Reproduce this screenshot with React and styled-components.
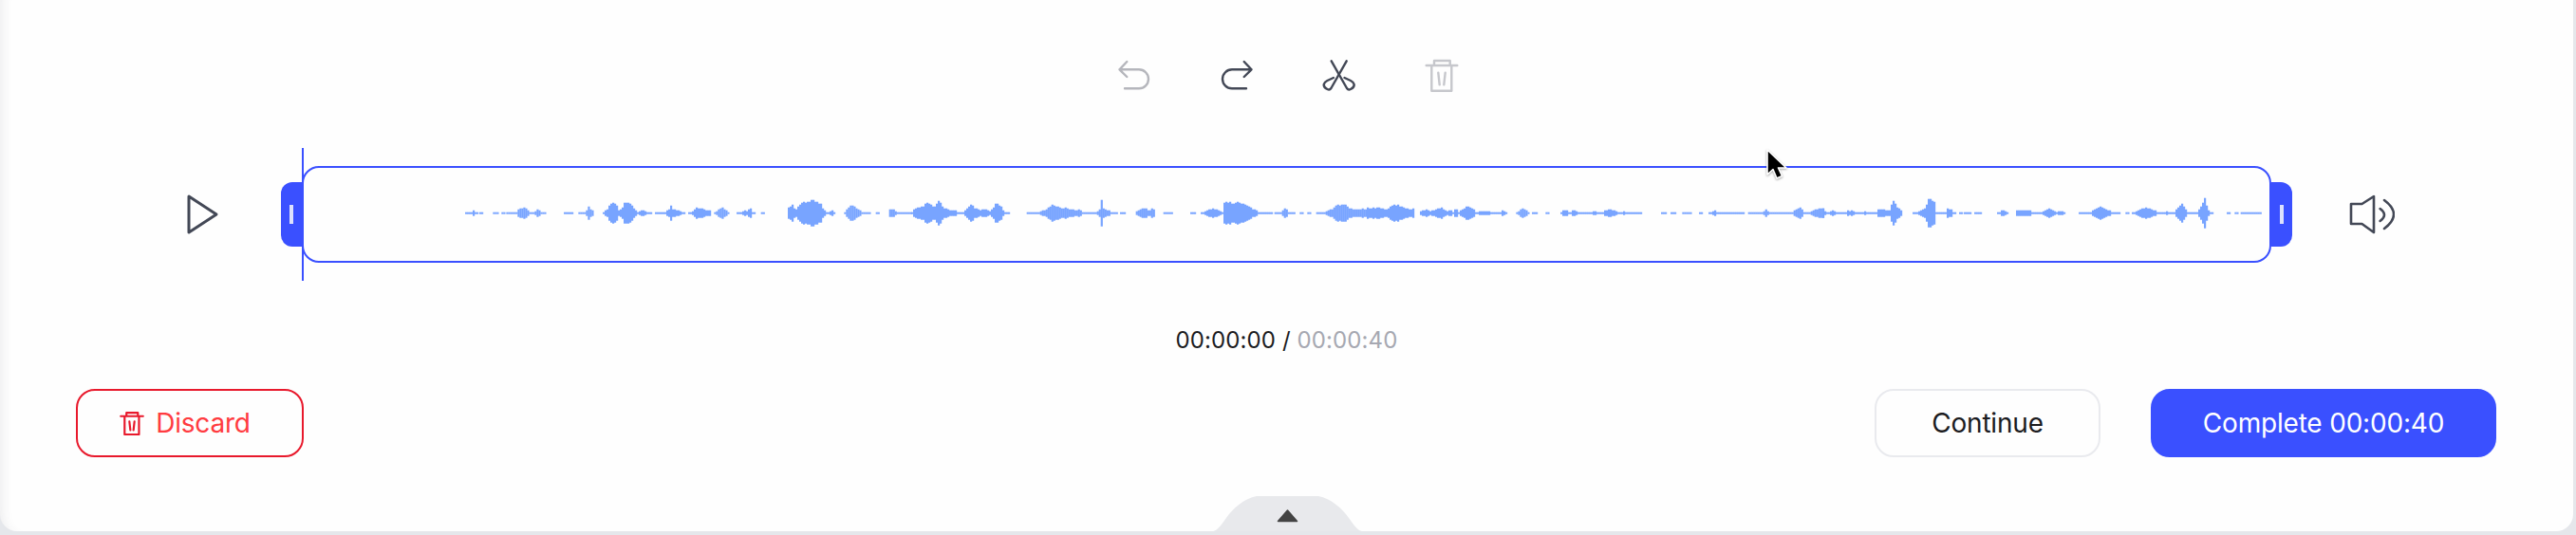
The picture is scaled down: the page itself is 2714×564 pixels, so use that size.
// App.jsx
import React from 'react';
import styled, { createGlobalStyle } from 'styled-components';

const GlobalStyle = createGlobalStyle`
  html, body {
    margin: 0;
    padding: 0;
    background: #e5e7eb;
    overflow: hidden;
  }
  * {
    box-sizing: border-box;
  }
`;

const Panel = styled.div`
  position: relative;
  width: 2711px;
  height: 560px;
  padding-top: 61px;
  background: #fefefe;
  border-radius: 0 0 18px 18px;
  box-shadow: inset 14px 0 14px -14px rgba(60, 60, 70, 0.12);
  font-family: Inter, 'Liberation Sans', sans-serif;
  display: flex;
  flex-direction: column;
`;

const Toolbar = styled.div`
  display: flex;
  justify-content: center;
  gap: 72px;
  padding-left: 3px;
  height: 36px;
`;

const ToolButton = styled.button`
  width: 36px;
  height: 36px;
  padding: 0;
  border: 0;
  background: none;
  color: ${(props) => (props.$off ? props.$offColor || '#b5b6bc' : '#434856')};
  svg {
    display: block;
  }
`;

const PlayerRow = styled.div`
  display: flex;
  align-items: center;
  margin-top: 78px;
  padding: 0 188px 0 195px;
  color: #434856;
`;

const PlayerIcon = styled.svg`
  flex: none;
  display: block;
`;

const Selection = styled.div`
  position: relative;
  flex: 1;
  height: 102px;
  margin: 0 82px 0 87px;
  border: 2px solid #3a50ff;
  border-radius: 18px;
`;

const Playhead = styled.div`
  position: absolute;
  left: -2px;
  top: -21px;
  bottom: -21px;
  width: 2px;
  background: #3a50ff;
`;

const Handle = styled.div`
  position: absolute;
  top: 15px;
  width: 22px;
  height: 68px;
  background: #3a50ff;
  display: flex;
  align-items: center;
  justify-content: center;
  ${(props) =>
    props.$side === 'left'
      ? 'left: -24px; border-radius: 12px 0 0 12px;'
      : 'right: -24px; border-radius: 0 12px 12px 0;'}
  &::after {
    content: '';
    width: 4px;
    height: 20px;
    background: #dde1fd;
  }
`;

const Wave = styled.svg`
  display: block;
  width: 100%;
  height: 100%;
  filter: blur(0.5px);
`;

const TimeRow = styled.div`
  margin-top: 67px;
  height: 30px;
  line-height: 30px;
  font-size: 24px;
  letter-spacing: 0.1px;
  text-align: center;
  color: #1c1c1f;
`;

const TotalTime = styled.span`
  color: #a6a8b1;
`;

const Footer = styled.div`
  display: flex;
  align-items: center;
  justify-content: space-between;
  margin-top: 36px;
  padding: 0 81px 0 80px;
`;

const ButtonGroup = styled.div`
  display: flex;
  gap: 53px;
`;

const Button = styled.button`
  width: ${(props) => props.$width}px;
  height: 72px;
  display: flex;
  align-items: center;
  justify-content: center;
  gap: 12px;
  padding: 0 ${(props) => props.$trail || 0}px 0 0;
  font-family: inherit;
  font-size: 28px;
  letter-spacing: -0.2px;
  border-radius: 20px;
  border: 2px solid ${(props) => props.$border};
  background: ${(props) => props.$bg};
  color: ${(props) => props.$color};
`;

const DiscardIcon = styled.span`
  display: flex;
  color: #e8192c;
`;

const CollapseTab = styled.button`
  position: absolute;
  left: 1278px;
  bottom: 0;
  width: 157px;
  height: 37px;
  padding: 0;
  border: 0;
  background: none;
  svg {
    display: block;
  }
`;

const Cursor = styled.svg`
  position: absolute;
  left: 1859px;
  top: 156px;
  filter: drop-shadow(0 1px 1px rgba(0, 0, 0, 0.35));
`;

// waveform outline read off the reference: [x offset, segments of [x, half height]] in 3x px
const WAVE = [
  [480, [
    [[30, 3], [50, 3], [55, 8], [60, 3], [68, 3]],
    [[75, 3], [87, 3]],
    [[118, 3], [135, 3]],
    [[145, 3], [155, 3]],
    [[160, 3], [190, 3], [197, 14], [208, 16], [222, 14], [228, 4], [245, 4], [258, 10], [270, 4], [285, 3]],
    [[342, 3], [370, 3]],
    [[388, 3], [405, 5], [412, 10], [417, 22], [422, 10], [430, 8], [433, 3]],
    [[465, 4], [478, 12], [488, 30], [497, 32], [505, 25], [512, 10], [522, 10], [530, 28], [545, 30], [558, 22], [565, 8], [575, 5], [585, 10], [597, 6], [620, 3]],
    [[630, 3], [660, 5], [672, 12], [677, 28], [682, 12], [700, 8], [722, 3]],
    [[735, 3], [750, 8], [755, 15], [780, 13], [790, 8], [800, 12], [803, 3]],
    [[817, 3], [840, 18], [862, 3]],
    [[888, 3], [905, 7], [920, 6], [928, 16], [935, 6], [948, 3]],
    [[965, 3], [975, 3]],
    [[1050, 15], [1060, 25], [1072, 10], [1085, 25], [1100, 35], [1122, 38], [1125, 45], [1130, 38], [1150, 30], [1160, 12], [1172, 3], [1185, 9], [1198, 3]],
    [[1228, 4], [1240, 18], [1252, 25], [1265, 15], [1285, 3], [1312, 3]],
    [[1328, 3], [1338, 3]],
    [[1370, 10], [1375, 14], [1385, 8], [1395, 3], [1440, 3]],
  ]],
  [960, [
    [[0, 3], [10, 15], [20, 18], [40, 20], [45, 35], [55, 25], [65, 22], [75, 20], [82, 38], [92, 30], [100, 12], [108, 15], [120, 8], [135, 10], [145, 3], [165, 3], [175, 15], [188, 25], [200, 15], [215, 10], [235, 12], [248, 5], [258, 20], [268, 32], [280, 20], [290, 6], [312, 3]],
    [[365, 3], [395, 4], [415, 8], [430, 15], [440, 25], [460, 22], [475, 12], [488, 18], [500, 10], [530, 10], [545, 3], [585, 4], [595, 15], [600, 45], [605, 15], [620, 8], [635, 3], [650, 3]],
    [[660, 3], [675, 3]],
    [[710, 6], [725, 14], [745, 12], [750, 4], [755, 14], [762, 14], [770, 3]],
    [[797, 3], [823, 3]],
    [[882, 3], [900, 3]],
    [[915, 3], [935, 8], [950, 14], [965, 10], [983, 4], [988, 38], [1010, 30], [1035, 32], [1060, 25], [1080, 12], [1100, 3], [1120, 3]],
    [[1125, 3], [1140, 3]],
    [[1148, 3], [1160, 3], [1165, 3], [1178, 15], [1190, 5], [1210, 3]],
    [[1228, 3], [1238, 3]],
    [[1252, 3], [1262, 3]],
    [[1280, 3], [1310, 6], [1330, 12], [1345, 25], [1370, 25], [1385, 12], [1410, 10], [1425, 15], [1440, 8]],
  ]],
  [1440, [
    [[0, 15], [20, 15], [35, 18], [55, 10], [65, 15], [75, 20], [90, 25], [95, 30], [100, 22], [125, 15], [135, 8], [148, 18], [150, 3]],
    [[168, 6], [185, 12], [195, 5], [215, 12], [235, 16], [250, 6], [262, 12], [270, 3], [280, 14], [290, 3], [300, 12], [315, 20], [330, 15], [345, 3], [350, 6], [365, 7], [385, 6], [395, 3], [410, 3], [428, 8], [440, 3]],
    [[472, 3], [490, 14], [510, 3]],
    [[522, 3], [540, 3]],
    [[565, 3], [575, 3]],
    [[612, 4], [625, 10], [640, 4], [655, 10], [665, 3], [705, 3], [718, 8], [730, 3], [745, 5], [765, 12], [780, 8], [795, 4], [810, 7], [820, 3], [870, 3]],
    [[930, 2], [945, 6]],
    [[960, 3], [975, 6], [978, 3]],
    [[997, 3], [1027, 3]],
    [[1050, 5], [1060, 2]],
    [[1080, 3], [1098, 8], [1110, 3], [1190, 3]],
    [[1205, 3], [1245, 3], [1260, 10], [1275, 3], [1295, 3], [1305, 6], [1315, 3], [1330, 3], [1345, 5], [1365, 18], [1380, 5], [1400, 5], [1425, 14], [1440, 14]],
  ]],
  [1920, [
    [[0, 12], [10, 4], [20, 5], [30, 8], [45, 3], [68, 3], [75, 6], [90, 9], [105, 4], [120, 3], [130, 7], [140, 3], [155, 3], [165, 3], [175, 12], [200, 10], [210, 8], [218, 30], [222, 35], [235, 18], [250, 5]],
    [[285, 3], [310, 8], [325, 15], [330, 40], [350, 38], [355, 15], [356, 3], [385, 3], [392, 12], [405, 10], [410, 3], [420, 3]],
    [[432, 3], [440, 3]],
    [[447, 3], [470, 3]],
    [[480, 3], [500, 3]],
    [[552, 3], [568, 9], [585, 3]],
    [[612, 8], [640, 8], [645, 9], [660, 5], [675, 3], [690, 4], [700, 8], [715, 16], [730, 8], [742, 3], [745, 8], [760, 6], [768, 3]],
    [[810, 3], [845, 5], [860, 12], [875, 20], [890, 12], [915, 4], [940, 3]],
    [[958, 3], [968, 3]],
    [[978, 3], [1000, 10], [1020, 16], [1040, 12], [1058, 4], [1075, 3], [1085, 7], [1095, 3], [1110, 5], [1125, 18], [1133, 30], [1140, 20], [1150, 5], [1180, 3], [1190, 15], [1200, 30], [1203, 60], [1208, 30], [1215, 15], [1222, 3], [1235, 3]],
    [[1278, 3], [1290, 3]],
    [[1303, 3], [1312, 3]],
    [[1322, 3], [1345, 3], [1350, 6], [1360, 3], [1385, 3]],
  ]],
];

const WAVE_LEFT = 320;
const WAVE_MID = 47.7;
const COLUMN = 2;

function noise(x) {
  const v = Math.sin(x * 12.9898) * 43758.5453;
  return v - Math.floor(v);
}

function heightAt(seg, v) {
  for (let i = 0; i < seg.length - 1; i++) {
    const [x0, h0] = seg[i];
    const [x1, h1] = seg[i + 1];
    if (v <= x1) return h0 + ((h1 - h0) * (v - x0)) / Math.max(x1 - x0, 1);
  }
  return seg[seg.length - 1][1];
}

// turn one outline into blocky columns, the way the wave form is rastered in the app
function waveColumns(offset, seg) {
  const start = seg[0][0];
  const end = seg[seg.length - 1][0];
  const cols = [];
  for (let v = start; v < end; v += COLUMN * 3) {
    const x = offset + v / 3 - WAVE_LEFT;
    const base = heightAt(seg, v) / 3;
    const half = base < 2 ? 1 : Math.round(base * (1 + 0.22 * (noise(x) - 0.25)));
    cols.push({ x, half });
  }
  return cols;
}

function Waveform() {
  return (
    <Wave viewBox="0 0 2071 98" preserveAspectRatio="none">
      {WAVE.map(([offset, segs]) =>
        segs.map((seg, i) =>
          waveColumns(offset, seg).map((col) => (
            <rect
              key={`${offset}-${i}-${col.x}`}
              x={col.x}
              y={WAVE_MID - col.half}
              width={COLUMN + 0.2}
              height={col.half * 2}
              fill="#78a4ff"
            />
          ))
        )
      )}
    </Wave>
  );
}

function Glyph({ size = 36, width = 2.4, children }) {
  return (
    <svg width={size} height={size} viewBox="0 0 36 36" fill="none" stroke="currentColor" strokeWidth={width} strokeLinecap="round" strokeLinejoin="round">
      {children}
    </svg>
  );
}

const UndoIcon = () => (
  <Glyph>
    <path d="M10.3 4 2.5 12.3 10.3 20M2.5 12.3H23A10 10 0 0 1 23 32.3H8" />
  </Glyph>
);

const RedoIcon = () => (
  <Glyph>
    <path d="M25.7 4 33.5 12.3 25.7 20M33.5 12.3H13A10 10 0 0 0 13 32.3H28" />
  </Glyph>
);

const CutIcon = () => (
  <Glyph>
    <path d="M9.7 3.3 26 32Q27.5 34.2 30 33 34 31 33.7 28 33 25.5 30 24L23.5 21" />
    <path d="M25.7 3.3 9.4 32Q7.9 34.2 5.4 33 1.4 31 1.7 28 2.4 25.5 5.4 24L11.9 21" />
  </Glyph>
);

const TrashIcon = ({ size, width }) => (
  <Glyph size={size} width={width}>
    <path d="M1.7 8H34.3M10 8V3H26.7V8M7.3 8V34.7H28.3V8M14.3 15.7 15.7 28.3M21.7 15.7 20.3 28.3" />
  </Glyph>
);

const VALUES = { current: '00:00:00', total: '00:00:40' };

export default function App() {
  return (
    <>
      <GlobalStyle />
      <Panel>
        <Toolbar>
          <ToolButton $off><UndoIcon /></ToolButton>
          <ToolButton><RedoIcon /></ToolButton>
          <ToolButton><CutIcon /></ToolButton>
          <ToolButton $off $offColor="#c6c7cc"><TrashIcon /></ToolButton>
        </Toolbar>

        <PlayerRow>
          <PlayerIcon width="36" height="46" viewBox="0 0 36 46" fill="none" stroke="currentColor" strokeWidth="3" strokeLinejoin="round">
            <path d="M4 4 33 23 4 42Z" />
          </PlayerIcon>
          <Selection>
            <Playhead />
            <Handle $side="left" />
            <Handle $side="right" />
            <Waveform />
          </Selection>
          <PlayerIcon width="48" height="42" viewBox="0 0 48 42" fill="none" stroke="currentColor" strokeWidth="2.6" strokeLinejoin="round" strokeLinecap="round">
            <path d="M2 10H13.5L26 2V40L13.5 31H2Z" />
            <path d="M32.6 15Q41.4 21.5 32.6 28" />
            <path d="M37 6Q57 21 37 36" />
          </PlayerIcon>
        </PlayerRow>

        <TimeRow>
          {VALUES.current} / <TotalTime>{VALUES.total}</TotalTime>
        </TimeRow>

        <Footer>
          <Button $width={240} $trail={10} $border="#e8192c" $bg="#fefefe" $color="#ff3b40">
            <DiscardIcon><TrashIcon size={26} width={3} /></DiscardIcon>
            Discard
          </Button>
          <ButtonGroup>
            <Button $width={238} $border="#e9eaee" $bg="#fefefe" $color="#1c1c1f">Continue</Button>
            <Button $width={364} $border="#3a50ff" $bg="#3a50ff" $color="#ffffff">Complete {VALUES.total}</Button>
          </ButtonGroup>
        </Footer>

        <CollapseTab>
          <svg width="157" height="37" viewBox="0 0 157 37">
            <path d="M0 37C5 36 9 30 14 23 20 14 33 2 46 0H111C124 2 137 14 143 23 148 30 152 36 157 37Z" fill="#e8e9ec" />
            <path d="M78.5 15 88.5 26.5H68.5Z" fill="#434343" stroke="#434343" strokeWidth="1.5" strokeLinejoin="round" />
          </svg>
        </CollapseTab>

        <Cursor width="28" height="38" viewBox="0 0 28 38">
          <path d="M3 2V28L9 22.5 13 32 18.5 29.5 14.5 21H23Z" fill="#000" stroke="#fff" strokeWidth="1.6" strokeLinejoin="round" />
        </Cursor>
      </Panel>
    </>
  );
}
